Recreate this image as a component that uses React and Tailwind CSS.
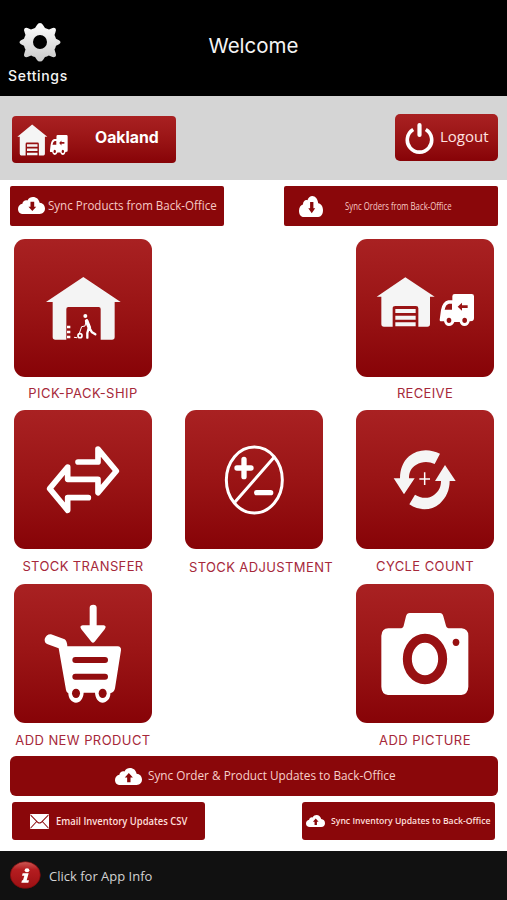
import React from "react";

const inter = "font-['Inter','Liberation_Sans',sans-serif]";
const open = "font-['Open_Sans','Noto_Sans',sans-serif]";
const glossy = "bg-linear-to-b from-[#a92122] via-[#9a1415] to-[#870307]";

function Cloud({ up, className }) {
  return (
    <svg className={className} viewBox="0 0 80 50" preserveAspectRatio="none" fill="#fff">
      <path d="M16 50C6 50 0 44 0 35c0-8 6-14 13-15C14 12 21 8 28 10 32 3 38 0 44 0c11 0 18 7 20 17 10 1 16 8 16 17 0 9-6 16-16 16Z" />
      <path
        fill="#8a080a"
        d={up ? "M41 15 L53 28 H46 V42 H36 V28 H29 Z" : "M37 14 H48 V29 H54 L42.500 41 L31 29 H37 Z"}
      />
    </svg>
  );
}

function Depot() {
  return (
    <g>
      <path
        fill="#f5f5f5"
        d="M196 127 L284 185 H270 V267 Q270 275 262 275 H235 V220 Q235 213 228 213 H166 Q158 213 158 220 V275 H132 Q124 275 124 267 V185 H110 Z"
      />
      <path fill="#f5f5f5" d="M166 222 H227 V234 H166Z M166 242 H227 V254 H166Z M166 262 H227 V274 H166Z" />
      <path
        fill="#fff"
        fillRule="evenodd"
        d="M344 177 H395 Q402 177 402 184 V250 Q402 257 397 258 L389 259 Q386 273 373 273 Q363 273 359 261 H343 Q338 273 327 273 Q315 273 312 259 H302 Q299 259 299 254 L303 225 Q308 199 325 196 H337 V184 Q337 177 344 177Z M314 224 H336 V206 H327 Q317 208 314 224Z M353 215 L366 203 V211 H383 V219 H366 V227Z M327 248 A7 8 0 1 0 327 264 A7 8 0 1 0 327 248Z M374 248 A7 8 0 1 0 374 264 A7 8 0 1 0 374 248Z"
      />
    </g>
  );
}

function Tile({ box, label, tall, labelClass, children }) {
  return (
    <div className="flex w-[138px] flex-col items-center">
      <div className={`w-[138px] overflow-hidden rounded-[11px] ${glossy} ${tall ? "h-[139px]" : "h-[138px]"}`}>
        <svg className="block h-full w-full" viewBox={box} preserveAspectRatio="none">
          {children}
        </svg>
      </div>
      <div className={`whitespace-nowrap text-[13px] leading-4 text-[#a6283a] ${inter} ${labelClass}`}>{label}</div>
    </div>
  );
}

export default function App() {
  return (
    <div className="flex h-[900px] w-[507px] flex-col overflow-hidden bg-white">
      <header className="grid h-24 grid-cols-[76px_1fr_76px] bg-black text-[#f4f4f4]">
        <div className="flex flex-col items-center pt-[22px]">
          <svg className="ml-[3px] block h-[40px] w-[42px]" viewBox="-21 -20 42 40">
            <defs>
              <linearGradient id="gear" x1="0" y1="0" x2="0" y2="1">
                <stop offset="0" stopColor="#fff" />
                <stop offset="1" stopColor="#c9c9c9" />
              </linearGradient>
            </defs>
            <path
              fill="url(#gear)"
              fillRule="evenodd"
              d="M-3-17 Q-2-19 0-19 Q2-19 3-17 L5-14 Q7-13.500 9-12.500 L12.500-14 Q14.500-14.500 15.500-13.500 Q16.500-12.500 15.500-10 L14.500-7 Q15.500-5 16-3.200 L19-1.800 Q20.500-.8 20.500.3 Q20.500 1.500 19 2.200 L16 3.800 Q15.500 6 14.500 7.500 L15.700 11.500 Q16.500 13.500 15.500 14.500 Q14.200 15.500 12.500 15 L8.800 13.500 Q7 14.500 5 15 L3 18 Q2 19.500 0 19.500 Q-2 19.500-3 18 L-5 15 Q-7 14.500-8.800 13.500 L-12.500 15 Q-14.500 15.500-15.500 14.500 Q-16.500 13.500-15.700 11.500 L-14.500 7.500 Q-15.500 6-16 3.800 L-19 2.200 Q-20.500 1.500-20.500.3 Q-20.500-.8-19-1.800 L-16-3.200 Q-15.500-5-14.500-7 L-15.500-10 Q-16.500-12.500-15.500-13.500 Q-14.500-14.500-12.500-14 L-9-12.500 Q-7-13.500-5-14Z M0-7 A7 7 0 1 0 0 7 A7 7 0 1 0 0-7Z"
            />
          </svg>
          <div className={`mt-[5px] text-[14px] leading-[18px] font-medium tracking-[0.65px] ${inter}`}>Settings</div>
        </div>
        <h1 className={`self-center pb-[4px] text-center text-[20.500px] leading-6 ${inter}`}>Welcome</h1>
      </header>

      <section className="flex h-[84px] items-start justify-between bg-[#d5d5d5] pr-[9px] pl-3">
        <button className={`mt-5 flex h-[47px] w-[164px] items-center rounded-[4px] ${glossy}`}>
          <svg className="ml-[5px] h-[32px] w-[51px] shrink-0" viewBox="108 124 296 154" preserveAspectRatio="none">
            <Depot />
          </svg>
          <span className={`ml-[27px] text-[15.800px] leading-5 font-bold text-white ${inter} -mt-[4px]`}>Oakland</span>
        </button>
        <button className={`mt-[18px] flex h-[47px] w-[103px] items-center rounded-[5px] ${glossy}`}>
          <svg className="mt-px ml-[10px] h-[32px] w-[29px] shrink-0" viewBox="0 0 29 32" fill="none" stroke="#fff">
            <path strokeWidth="3.600" d="M8.200 7.500 A12.200 12.200 0 1 0 20.800 7.500" />
            <path strokeWidth="4.200" strokeLinecap="round" d="M14.500 3 V13" />
          </svg>
          <span className={`-mt-[3px] ml-[6px] text-[15px] leading-5 font-medium text-[#ffe3e1] ${open}`}>Logout</span>
        </button>
      </section>

      <main className="flex h-[671px] flex-col pt-[6px]">
        <div className="flex justify-between pr-[9px] pl-[10px]">
          <button className="flex h-[40px] w-[214px] items-center rounded-[2px] bg-[#8a070a]">
            <Cloud className="-mt-[2px] ml-2 h-[17px] w-[27px] shrink-0" />
            <span
              className={`-mt-px ml-[3px] origin-left scale-x-[0.962] whitespace-nowrap text-[12px] leading-4 text-[#f7c9c5] ${open}`}
            >
              Sync Products from Back-Office
            </span>
          </button>
          <button className="flex h-[40px] w-[214px] items-center rounded-[2px] bg-[#8a070a]">
            <Cloud className="ml-[15px] h-[21px] w-[24px] shrink-0" />
            <span
              className={`ml-[22px] origin-left scale-x-[0.74] whitespace-nowrap text-[10.500px] leading-4 font-medium text-[#f7c9c5] ${open}`}
            >
              Sync Orders from Back-Office
            </span>
          </button>
        </div>

        <div className="mt-[13px] flex h-[171px] justify-between pr-[13px] pl-[14px]">
          <Tile box="42 12 414 414" label="PICK-PACK-SHIP" labelClass="mt-2 tracking-[0.45px]">
            <path
              fill="#f4f4f4"
              d="M250 126 L362 201 H344 V306 Q344 314 336 314 H302 V222 Q302 216 296 216 H205 Q199 216 199 222 V314 H166 Q158 314 158 306 V201 H138Z"
            />
            <g fill="none" stroke="#fff" strokeLinecap="round" strokeLinejoin="round">
              <path strokeWidth="11" d="M260 258 L268 278" />
              <path strokeWidth="7" d="M269 280 L276 292 L286 298 M266 280 L262 294 V308" />
              <path strokeWidth="3" d="M258 260 L255 273 L245 275 L237 298 M223 307 L230 308" />
              <circle cx="240" cy="302" r="6" strokeWidth="5" />
            </g>
            <circle cx="256" cy="243" r="6" fill="#fff" />
            <path fill="#fff" d="M201 272 H211 V280 H201Z M201 287 H211 V295 H201Z M201 302 H211 V310 H201Z" />
          </Tile>
          <Tile box="48 12 414 414" label="RECEIVE" labelClass="mt-2 tracking-[0.35px]">
            <Depot />
          </Tile>
        </div>

        <div className="flex h-[174px] justify-between pr-[13px] pl-[14px]">
          <Tile tall box="42 15 414 417" label="STOCK TRANSFER" labelClass="mt-[9px] tracking-[0.38px]">
            <path
              fill="none"
              stroke="#fff"
              strokeWidth="17"
              strokeLinecap="round"
              strokeLinejoin="round"
              d="M234 171 H294 V132 L349 198 L294 263 V223 H203 V186 L149 251 L203 316 V278 H265"
            />
          </Tile>
          <Tile tall box="45 15 414 417" label="STOCK ADJUSTMENT" labelClass="mt-[10px] ml-[14px] tracking-[0.38px]">
            <g fill="none" stroke="#fff" strokeLinecap="round">
              <ellipse cx="253" cy="225" rx="84" ry="99" strokeWidth="9" />
              <path strokeWidth="9" d="M195 291 L311 158" />
              <path strokeWidth="16" d="M222 163 V215 M201 189 H243 M260 263 H302" />
            </g>
          </Tile>
          <Tile tall box="48 15 414 417" label="CYCLE COUNT" labelClass="mt-[9px] tracking-[0.4px]">
            <g fill="#f5f5f5">
              <path d="M300 146 L284 177 C266 168 245 169 229 179 C212 189 207 203 207 220 H224 L192 268 L161 220 H180 C180 194 188 171 207 154 C232 132 268 130 300 146Z" />
              <path d="M208 298 L225 269 C243 281 266 282 282 270 C297 259 303 245 303 228 H285 L315 180 L347 228 H329 C329 254 319 278 299 296 C273 318 237 318 208 298Z" />
            </g>
            <path fill="none" stroke="#fff" strokeWidth="4.500" d="M254 202 V240 M238 222 H270" />
          </Tile>
        </div>

        <div className="flex h-[172px] justify-between pr-[13px] pl-[14px]">
          <Tile tall box="42 18 414 417" label="ADD NEW PRODUCT" labelClass="mt-[9px] tracking-[0.42px]">
            <path
              fill="#fff"
              d="M269 89 Q269 80 280 80 Q290 80 290 89 V142 H311 Q321 144 314 154 L284 191 Q279 197 274 191 L244 154 Q237 144 248 142 H269Z"
            />
            <path
              fill="#fff"
              d="M153 169 L194 184 Q201 188 202 205 H353 Q364 206 363 217 L345 331 Q343 343 331 346 C332 363 319 374 308 374 C296 374 286 361 285 344 H251 C250 362 240 374 228 374 C215 374 205 361 205 346 Q199 343 198 336 L176 211 L143 199 Q133 196 134 183 Q139 168 153 169Z"
            />
            <path
              fill="none"
              stroke="#930d0f"
              strokeWidth="18"
              strokeLinecap="round"
              d="M226 246 H315 M226 296 H315"
            />
            <ellipse cx="228" cy="346" rx="12" ry="14" fill="#900b0d" />
            <ellipse cx="308" cy="346" rx="12" ry="14" fill="#900b0d" />
          </Tile>
          <Tile tall box="48 18 414 417" label="ADD PICTURE" labelClass="mt-[9px] tracking-[0.45px]">
            <path
              fill="#fff"
              d="M209 105 H300 Q307 105 310 115 L318 143 Q320 151 330 151 H365 Q385 153 385 173 V326 Q384 348 364 351 H144 Q125 349 124 326 V173 Q125 152 145 151 H180 Q189 151 191 143 L198 115 Q201 105 209 105Z"
            />
            <ellipse cx="255" cy="243" rx="53" ry="62" fill="none" stroke="#981113" strokeWidth="27" />
            <ellipse cx="348" cy="193" rx="10" ry="11" fill="#971011" />
          </Tile>
        </div>

        <button className="ml-[10px] flex h-[40px] w-[488px] shrink-0 items-center rounded-[6px] bg-[#8a070a]">
          <Cloud up className="ml-[105px] h-[17px] w-[27px] shrink-0" />
          <span
            className={`ml-[6px] origin-left scale-x-[0.943] whitespace-nowrap text-[12.500px] leading-4 text-[#f7d0cb] ${open}`}
          >
            Sync Order &amp; Product Updates to Back-Office
          </span>
        </button>
        <div className="mt-[6px] flex justify-between pr-[12px] pl-3">
          <button className="flex h-[38px] w-[193px] items-center rounded-[3px] bg-[#8a070a]">
            <svg className="ml-[18px] h-[15px] w-[19px] shrink-0" viewBox="0 0 57 44" preserveAspectRatio="none">
              <rect width="57" height="44" rx="3" fill="#fff" />
              <path fill="none" stroke="#8a070a" strokeWidth="3" d="M2 3 L24 25 Q28 28 33 25 L55 3 M2 41 L20 22 M55 41 L37 22" />
            </svg>
            <span
              className={`ml-[7px] origin-left scale-x-[0.943] whitespace-nowrap text-[10px] leading-4 font-semibold text-[#ffdfda] ${open}`}
            >
              Email Inventory Updates CSV
            </span>
          </button>
          <button className="flex h-[38px] w-[193px] items-center rounded-[3px] bg-[#8a070a]">
            <Cloud up className="ml-1 h-[12px] w-[19px] shrink-0" />
            <span
              className={`ml-[6px] w-[160px] origin-left scale-x-[0.91] whitespace-nowrap text-left text-[9.500px] leading-4 font-semibold text-[#ffdfda] ${open}`}
            >
              Sync Inventory Updates to Back-Office
            </span>
          </button>
        </div>
      </main>

      <footer className="flex h-[49px] items-center bg-[#111] pl-[10px]">
        <svg className="-mt-[2px] h-[28px] w-[31px] shrink-0" viewBox="0 0 93 84">
          <defs>
            <linearGradient id="orb" x1="0" y1="0" x2="0" y2="1">
              <stop offset="0" stopColor="#cc5a56" />
              <stop offset=".3" stopColor="#b51d20" />
              <stop offset="1" stopColor="#9b1013" />
            </linearGradient>
          </defs>
          <ellipse cx="46" cy="42" rx="45" ry="40" fill="url(#orb)" stroke="#7d0a0c" strokeWidth="2" />
          <ellipse cx="51" cy="28" rx="7" ry="6" fill="#fff" />
          <path fill="#fff" d="M38 37 H56 L50 58 H57 L55 65 H34 L36 58 H39 L43 44 H36Z" />
        </svg>
        <span className={`ml-2 text-[13px] leading-4 text-[#d3d3d3] ${open}`}>Click for App Info</span>
      </footer>
    </div>
  );
}
